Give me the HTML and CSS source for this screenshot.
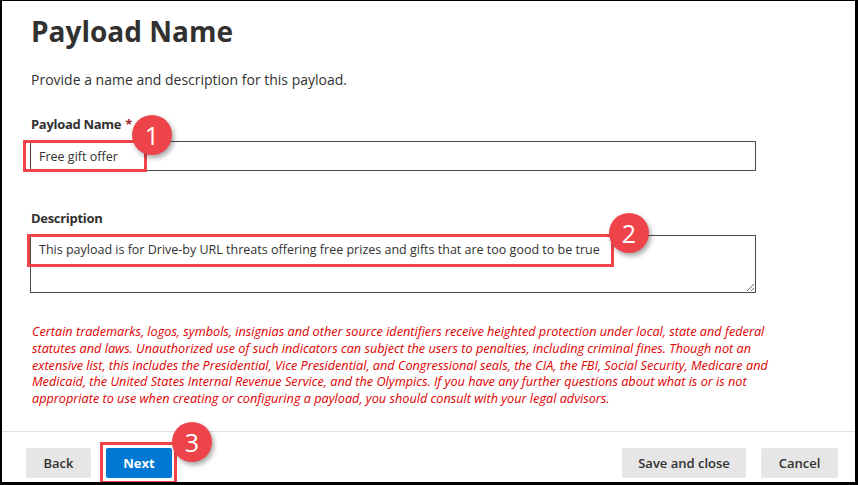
FILE: index.html
```html
<!DOCTYPE html>
<html lang="en">
<head>
<meta charset="utf-8">
<title>Payload Name</title>
<link rel="stylesheet" href="styles.css">
</head>
<body>
<div class="frame">
  <main class="content">
    <h1 class="title">Payload Name</h1>
    <p class="subtitle">Provide a name and description for this payload.</p>

    <label class="label" for="pname">Payload Name <span class="req">*</span></label>
    <div class="field">
      <input id="pname" class="input" type="text" value="Free gift offer">
      <span class="mark mark-name"></span>
      <span class="badge badge-1">1</span>
    </div>

    <label class="label label-desc" for="pdesc">Description</label>
    <div class="field">
      <textarea id="pdesc" class="textarea">This payload is for Drive-by URL threats offering free prizes and gifts that are too good to be true</textarea>
      <span class="mark mark-desc"></span>
      <span class="badge badge-2">2</span>
    </div>

    <p class="legal">Certain trademarks, logos, symbols, insignias and other source identifiers receive heighted protection under local, state and federal<br>statutes and laws. Unauthorized use of such indicators can subject the users to penalties, including criminal fines. Though not an<br>extensive list, this includes the Presidential, Vice Presidential, and Congressional seals, the CIA, the FBI, Social Security, Medicare and<br>Medicaid, the United States Internal Revenue Service, and the Olympics. If you have any further questions about what is or is not<br>appropriate to use when creating or configuring a payload, you should consult with your legal advisors.</p>
  </main>

  <footer class="footer">
    <div class="group">
      <button class="btn btn-back" type="button">Back</button>
      <div class="btn-wrap">
        <button class="btn btn-primary" type="button">Next</button>
        <span class="mark mark-next"></span>
        <span class="badge badge-3">3</span>
      </div>
    </div>
    <div class="group">
      <button class="btn btn-save" type="button">Save and close</button>
      <button class="btn btn-cancel" type="button">Cancel</button>
    </div>
  </footer>
</div>
</body>
</html>
```

FILE: styles.css
```css
* { box-sizing: border-box; }

html, body {
  margin: 0;
  padding: 0;
  background: #ffffff;
}

body {
  font-family: "Segoe UI", "Open Sans", "Noto Sans", sans-serif;
  color: #323130;
}

.frame {
  width: 858px;
  height: 485px;
  border-style: solid;
  border-color: #000000;
  border-width: 1px 3px 3px 2px;
  display: flex;
  flex-direction: column;
  overflow: hidden;
}

.content {
  padding: 12px 0 0 29px;
}

.title {
  margin: 0;
  font-size: 28px;
  line-height: 36px;
  font-weight: 700;
  color: #323130;
}

.subtitle {
  margin: 21px 0 0;
  font-size: 14px;
  line-height: 20px;
}

.label {
  display: block;
  margin: 24px 0 0;
  font-size: 13px;
  line-height: 20px;
  font-weight: 700;
  letter-spacing: -0.3px;
}

.label-desc {
  margin-top: 37px;
}

.req {
  color: #a4262c;
  margin-left: 1px;
}

.field {
  position: relative;
  width: 726px;
  margin-top: 7px;
  margin-left: -1px;
}

.input,
.textarea {
  display: block;
  width: 726px;
  margin: 0;
  border: 1px solid #4a4a4a;
  border-radius: 0;
  font-family: inherit;
  font-size: 12.5px;
  line-height: 20px;
  color: #323130;
  background: #ffffff;
  outline: none;
}

.input {
  height: 30px;
  padding: 0 8px;
}

.textarea {
  height: 58px;
  padding: 4px 8px;
  resize: vertical;
}

.mark {
  position: absolute;
  border: 3px solid #f0434a;
  pointer-events: none;
}

.mark-name {
  left: -7px;
  top: -1px;
  width: 124px;
  height: 32px;
}

.mark-desc {
  left: -3px;
  top: -1px;
  width: 587px;
  height: 33px;
}

.mark-next {
  left: -6px;
  top: -6px;
  width: 77px;
  height: 42px;
}

.badge {
  position: absolute;
  width: 40px;
  height: 40px;
  border-radius: 50%;
  background: #ef434a;
  color: #ffffff;
  font-size: 25px;
  line-height: 40px;
  text-align: center;
  font-weight: 400;
  box-shadow: 2px 3px 5px rgba(0, 0, 0, 0.35);
}

.badge-1 { left: 102px; top: -26px; }
.badge-2 { left: 579px; top: -22px; }
.badge-3 { left: 66px; top: -26px; }

.legal {
  margin: 30px 0 0 1px;
  font-size: 12.7px;
  line-height: 16.75px;
  font-style: italic;
  color: #e00000;
  white-space: nowrap;
}

.footer {
  margin-top: auto;
  border-top: 1px solid #e1e1e1;
  padding: 16px 17px 4px 24px;
  display: flex;
  justify-content: space-between;
}

.group {
  display: flex;
  gap: 15px;
}

.btn-wrap {
  position: relative;
}

.btn {
  height: 30px;
  padding: 0;
  border: none;
  border-radius: 2px;
  background: #e6e6e6;
  color: #323130;
  font-family: inherit;
  font-size: 13px;
  font-weight: 600;
  line-height: 30px;
  text-align: center;
}

.btn-back { width: 65px; }

.btn-primary {
  width: 66px;
  background: #0078d4;
  color: #ffffff;
  font-weight: 700;
}

.btn-save { width: 124px; }
.btn-cancel { width: 77px; }
```
